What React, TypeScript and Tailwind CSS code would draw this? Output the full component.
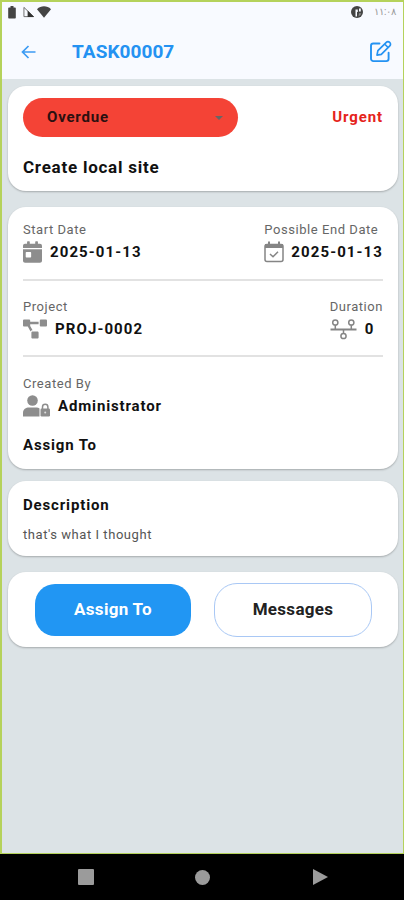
import React from "react";
import { FaCalendarDay, FaProjectDiagram } from "react-icons/fa";

function StatusBar() {
  return (
    <div className="flex h-5 items-center justify-between pl-[6px] pr-[6px] text-[#444]">
      <div className="flex items-center">
        <svg width="8" height="13" viewBox="0 0 8 13" fill="#444">
          <path d="M2.5 0h3v1.5H7a.8.8 0 0 1 .8.8v9.4a.8.8 0 0 1-.8.8H1a.8.8 0 0 1-.8-.8V2.300a.8.8 0 0 1 .8-.8h1.500z" />
        </svg>
        <svg className="ml-[7px]" width="12" height="12" viewBox="0 0 13 12">
          <path d="M1 1v10h10.500z" fill="none" stroke="#666" />
          <path d="M5 4.500v7h7z" fill="#333" />
        </svg>
        <svg className="ml-[2px]" width="14" height="12" viewBox="0 0 14 12" fill="#444">
          <path d="M0 3.200C4 -.6 10 -.6 14 3.200L7 11.800z" />
        </svg>
      </div>
      <div className="flex items-center">
        <svg width="14" height="14" viewBox="0 0 14 14">
          <circle cx="7" cy="7" r="6" fill="#444" />
          <path d="M5.500 4.500h2.300V7H7v4.500H5.500zM9 3.500h1.800v3H9z" fill="#f8faff" />
          <path d="M9 8.200h2.300A4.800 4.800 0 0 1 8.500 11.500z" fill="#888" />
        </svg>
        <span className="ml-[10px] w-[23px] whitespace-nowrap text-[10px] leading-none text-[#999]">١١:٠٨</span>
      </div>
    </div>
  );
}

function EditIcon() {
  return (
    <svg width="24" height="24" viewBox="0 0 24 24" fill="none" stroke="#2492f2" strokeWidth="1.900" strokeLinecap="round" strokeLinejoin="round">
      <path d="M10.500 4.500H4.300A2.300 2.300 0 0 0 2 6.800v13A2.300 2.300 0 0 0 4.300 22.100h13a2.300 2.300 0 0 0 2.300-2.300v-6" />
      <path d="M17.300 3.300a2.300 2.300 0 0 1 3.300 0l.2.200a2.300 2.300 0 0 1 0 3.300L12.300 15.300 8 16.200 8.900 11.700zM15.600 5l3.500 3.500" strokeWidth="1.700" />
    </svg>
  );
}

function CalendarCheckIcon() {
  return (
    <svg width="20" height="22" viewBox="0 0 20 22" fill="none" stroke="#858585">
      <rect x="1" y="3.500" width="18" height="17" rx="2" strokeWidth="1.500" />
      <path d="M1 3h18v4H1z" fill="#858585" stroke="none" />
      <path d="M5 .5v4M15 .5v4" strokeWidth="2" />
      <path d="M6 13l3 2.800 5-5" strokeWidth="1.500" />
    </svg>
  );
}

function DurationIcon() {
  return (
    <svg width="27" height="22" viewBox="0 0 27 22" fill="none" stroke="#858585" strokeWidth="1.500">
      <path d="M.5 11.500h26" strokeWidth="2" />
      <circle cx="5.300" cy="4.500" r="2.600" />
      <circle cx="21.300" cy="4.500" r="2.600" />
      <circle cx="13.500" cy="18" r="2.600" />
      <path d="M5.300 7v4M21.300 7v4M13.500 11v4.500" />
    </svg>
  );
}

function UserLockIcon() {
  return (
    <svg width="27" height="22" viewBox="0 0 27 22" fill="#8d8d8d">
      <circle cx="9.500" cy="5.500" r="5.300" />
      <path d="M0 21.500v-3.500c0-4 3-5.500 6-5.500h7c1.500 0 2.600.4 3.500 1v8z" />
      <rect x="17.500" y="13.500" width="9.500" height="8" rx="1.200" />
      <path d="M19.500 14v-2a2.700 2.700 0 0 1 5.400 0v2" fill="none" stroke="#8d8d8d" strokeWidth="1.500" />
      <circle cx="22.200" cy="17.500" r="1" fill="#ddd" />
    </svg>
  );
}

function Label({ children }: { children: React.ReactNode }) {
  return <div className="h-5 whitespace-nowrap text-[13px] leading-[21px] tracking-[0.55px] text-[#666]">{children}</div>;
}

function Value({ children }: { children: React.ReactNode }) {
  return <span className="whitespace-nowrap text-[15px] font-bold tracking-[0.85px] text-[#111]">{children}</span>;
}

function Code({ children }: { children: React.ReactNode }) {
  return <span className="whitespace-nowrap text-[15px] font-bold tracking-[1.1px] text-[#111]">{children}</span>;
}

const card = "rounded-[18px] bg-white px-[15px] shadow-[0_1px_2px_rgba(0,0,0,0.25)]";

export default function App() {
  return (
    <div className="flex h-[900px] w-[404px] flex-col bg-black font-['Roboto',sans-serif]">
      <div className="flex h-[854px] flex-col border border-l-2 border-t-2 border-[#b5d25b] bg-[#dce3e6]">
        <header className="h-[77px] bg-[#f8faff]">
          <StatusBar />
          <div className="flex h-[60px] items-center pl-[19px] pr-[10px]">
            <svg width="15" height="14" viewBox="0 0 15 14" fill="none" stroke="#3c9bf3" strokeWidth="1.700">
              <path d="M14.500 7H1.500M7.500 1l-6 6 6 6" />
            </svg>
            <h1 className="ml-[36px] text-[19px] font-bold tracking-[0.05px] text-[#2492f2]">TASK00007</h1>
            <div className="ml-auto pb-[2px]"><EditIcon /></div>
          </div>
        </header>
        <main className="flex flex-col pl-[6px] pr-[5px] pt-[7px]">
          <section className={`${card} h-[105px] pt-3`}>
            <div className="flex items-center justify-between">
              <button className="flex h-[39px] w-[215px] items-center justify-between rounded-full bg-[#f44336] pl-[24px] pr-[15px]">
                <span className="text-[15px] font-bold tracking-[0.8px] text-[#2b1010]">Overdue</span>
                <svg width="8" height="4" viewBox="0 0 8 4" fill="#666"><path d="M0 0h8L4 4z" /></svg>
              </button>
              <span className="text-[15px] font-bold tracking-[0.9px] text-[#e5231b]">Urgent</span>
            </div>
            <h2 className="mt-[18px] text-[17px] leading-6 font-bold tracking-[0.75px] text-[#111]">Create local site</h2>
          </section>

          <section className={`${card} mt-4 h-[262px] pt-3`}>
            <div className="flex h-[60px] justify-between">
              <div>
                <Label>Start Date</Label>
                <div className="flex h-[26px] items-center gap-[8px]">
                  <FaCalendarDay className="h-[22px] w-[19px] text-[#8d8d8d]" />
                  <Code>2025-01-13</Code>
                </div>
              </div>
              <div>
                <Label>Possible End Date</Label>
                <div className="flex h-[26px] items-center gap-[7px]">
                  <CalendarCheckIcon />
                  <Code>2025-01-13</Code>
                </div>
              </div>
            </div>
            <div className="h-[76px] border-t-2 border-[#e2e2e2] pt-[15px]">
              <div className="flex justify-between">
                <div>
                  <Label>Project</Label>
                  <div className="flex h-[26px] items-center gap-[8px]">
                    <FaProjectDiagram className="h-[20px] w-[24px] text-[#8d8d8d]" />
                    <Code>PROJ-0002</Code>
                  </div>
                </div>
                <div>
                  <Label>Duration</Label>
                  <div className="flex h-[26px] items-center gap-[8px]">
                    <DurationIcon />
                    <Code>0</Code>
                  </div>
                </div>
              </div>
            </div>
            <div className="border-t-2 border-[#e2e2e2] pt-[16px]">
              <Label>Created By</Label>
              <div className="flex h-[26px] items-center gap-[8px]">
                <UserLockIcon />
                <Value>Administrator</Value>
              </div>
              <div className="mt-[16px] h-5 leading-5"><Value>Assign To</Value></div>
            </div>
          </section>

          <section className={`${card} mt-3 h-[75px] pt-[13px]`}>
            <div className="h-5 leading-[21px]"><Value>Description</Value></div>
            <p className="mt-[10px] text-[13px] leading-[21px] tracking-[0.550px] text-[#555]">that's what I thought</p>
          </section>

          <section className={`${card} mt-4 flex h-[75px] items-center gap-[23px] pl-[27px]`}>
            <button className="h-[52px] w-[156px] rounded-[20px] bg-[#2196f3] text-[17px] font-bold tracking-[0.3px] text-white">Assign To</button>
            <button className="h-[54px] w-[158px] rounded-[23px] border border-[#a9c8f5] text-[17px] font-bold tracking-[0.3px] text-[#222]">Messages</button>
          </section>
        </main>
      </div>
      <nav className="flex h-[46px] items-center pl-[78px]">
        <div className="size-4 rounded-[1px] bg-[#9b9b9b]" />
        <div className="ml-[101px] size-[15px] rounded-full bg-[#9b9b9b]" />
        <svg className="ml-[103px]" width="15" height="16" viewBox="0 0 15 16" fill="#9b9b9b"><path d="M0 0l15 8-15 8z" /></svg>
      </nav>
    </div>
  );
}
